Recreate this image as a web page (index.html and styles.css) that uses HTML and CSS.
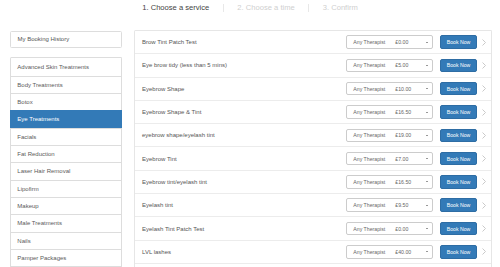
FILE: index.html
```
<!DOCTYPE html>
<html>
<head>
<meta charset="utf-8">
<link rel="stylesheet" href="styles.css">
</head>
<body>
<div class="steps">
  <span class="step active">1. Choose a service</span>
  <span class="step sep">2. Choose a time</span>
  <span class="step sep">3. Confirm</span>
</div>
<div class="main">
  <aside class="sidebar">
    <div class="box history">My Booking History</div>
    <ul class="list">
      <li>Advanced Skin Treatments</li>
      <li>Body Treatments</li>
      <li>Botox</li>
      <li class="current">Eye Treatments</li>
      <li>Facials</li>
      <li>Fat Reduction</li>
      <li>Laser Hair Removal</li>
      <li>Lipofirm</li>
      <li>Makeup</li>
      <li>Male Treatments</li>
      <li>Nails</li>
      <li>Pamper Packages</li>
    </ul>
  </aside>
  <section class="services">
    <div class="row"><span class="name">Brow Tint Patch Test</span><div class="select"><span class="who">Any Therapist</span><span>£0.00</span><i class="caret"></i></div><span class="btn">Book Now</span><svg class="chev" width="4" height="7" viewBox="0 0 4 7"><polyline points="0.5,0.5 3.5,3.5 0.5,6.5" fill="none" stroke="#c4c4c4" stroke-width="0.9"/></svg></div>
    <div class="row"><span class="name">Eye brow tidy (less than 5 mins)</span><div class="select"><span class="who">Any Therapist</span><span>£5.00</span><i class="caret"></i></div><span class="btn">Book Now</span><svg class="chev" width="4" height="7" viewBox="0 0 4 7"><polyline points="0.5,0.5 3.5,3.5 0.5,6.5" fill="none" stroke="#c4c4c4" stroke-width="0.9"/></svg></div>
    <div class="row"><span class="name">Eyebrow Shape</span><div class="select"><span class="who">Any Therapist</span><span>£10.00</span><i class="caret"></i></div><span class="btn">Book Now</span><svg class="chev" width="4" height="7" viewBox="0 0 4 7"><polyline points="0.5,0.5 3.5,3.5 0.5,6.5" fill="none" stroke="#c4c4c4" stroke-width="0.9"/></svg></div>
    <div class="row"><span class="name">Eyebrow Shape &amp; Tint</span><div class="select"><span class="who">Any Therapist</span><span>£16.50</span><i class="caret"></i></div><span class="btn">Book Now</span><svg class="chev" width="4" height="7" viewBox="0 0 4 7"><polyline points="0.5,0.5 3.5,3.5 0.5,6.5" fill="none" stroke="#c4c4c4" stroke-width="0.9"/></svg></div>
    <div class="row"><span class="name">eyebrow shape/eyelash tint</span><div class="select"><span class="who">Any Therapist</span><span>£19.00</span><i class="caret"></i></div><span class="btn">Book Now</span><svg class="chev" width="4" height="7" viewBox="0 0 4 7"><polyline points="0.5,0.5 3.5,3.5 0.5,6.5" fill="none" stroke="#c4c4c4" stroke-width="0.9"/></svg></div>
    <div class="row"><span class="name">Eyebrow Tint</span><div class="select"><span class="who">Any Therapist</span><span>£7.00</span><i class="caret"></i></div><span class="btn">Book Now</span><svg class="chev" width="4" height="7" viewBox="0 0 4 7"><polyline points="0.5,0.5 3.5,3.5 0.5,6.5" fill="none" stroke="#c4c4c4" stroke-width="0.9"/></svg></div>
    <div class="row"><span class="name">Eyebrow tint/eyelash tint</span><div class="select"><span class="who">Any Therapist</span><span>£16.50</span><i class="caret"></i></div><span class="btn">Book Now</span><svg class="chev" width="4" height="7" viewBox="0 0 4 7"><polyline points="0.5,0.5 3.5,3.5 0.5,6.5" fill="none" stroke="#c4c4c4" stroke-width="0.9"/></svg></div>
    <div class="row"><span class="name">Eyelash tint</span><div class="select"><span class="who">Any Therapist</span><span>£9.50</span><i class="caret"></i></div><span class="btn">Book Now</span><svg class="chev" width="4" height="7" viewBox="0 0 4 7"><polyline points="0.5,0.5 3.5,3.5 0.5,6.5" fill="none" stroke="#c4c4c4" stroke-width="0.9"/></svg></div>
    <div class="row"><span class="name">Eyelash Tint Patch Test</span><div class="select"><span class="who">Any Therapist</span><span>£0.00</span><i class="caret"></i></div><span class="btn">Book Now</span><svg class="chev" width="4" height="7" viewBox="0 0 4 7"><polyline points="0.5,0.5 3.5,3.5 0.5,6.5" fill="none" stroke="#c4c4c4" stroke-width="0.9"/></svg></div>
    <div class="row"><span class="name">LVL lashes</span><div class="select"><span class="who">Any Therapist</span><span>£40.00</span><i class="caret"></i></div><span class="btn">Book Now</span><svg class="chev" width="4" height="7" viewBox="0 0 4 7"><polyline points="0.5,0.5 3.5,3.5 0.5,6.5" fill="none" stroke="#c4c4c4" stroke-width="0.9"/></svg></div>
  </section>
</div>
</body>
</html>
```
FILE: styles.css
```
* { box-sizing: border-box; }
html, body { margin: 0; padding: 0; background: #fff; overflow: hidden; height: 267px; }
body {
  font-family: "Liberation Sans", Arial, sans-serif;
  font-size: 6px;
  color: #555;
}
.steps {
  height: 16px;
  display: flex;
  justify-content: center;
  align-items: center;
  font-size: 7.6px;
  color: #cfcfcf;
}
.step { padding: 0 13.5px; line-height: 8.5px; }
.step.sep { border-left: 1px solid #e8e8e8; }
.step.active { color: #444; }
.main {
  display: flex;
  gap: 12px;
  padding: 14px 8px 0 10px;
}
.sidebar { width: 112px; flex: none; padding-top: 0.7px; }
.box {
  border: 1px solid #ddd;
  border-radius: 1.5px;
}
.history {
  height: 17.33px;
  display: flex;
  align-items: center;
  padding-left: 6.5px;
  margin-bottom: 9.3px;
}
.list {
  list-style: none;
  margin: 0;
  padding: 0;
  border: 1px solid #ddd;
  border-bottom: none;
  border-radius: 1.5px;
}
.list::after {
  content: "";
  display: block;
  height: 17px;
  border-top: 1px solid #ddd;
}
.list li {
  height: 17.33px;
  display: flex;
  align-items: center;
  padding-left: 6.3px;
  border-top: 1px solid #ddd;
  color: #5a5a5a;
}
.list li:first-child { border-top: none; }
.list li.current {
  background: #337ab7;
  color: #fff;
  border-top-color: #337ab7;
  margin: 0 -1px;
  padding-left: 7.3px;
}
.services {
  flex: 1;
  border: 1px solid #e6e6e6;
  border-bottom: none;
  border-radius: 1.5px;
}
.services::after {
  content: "";
  display: block;
  height: 20px;
}
.row {
  height: 23.3px;
  display: flex;
  align-items: center;
  padding: 0 5px 0 7px;
  border-bottom: 1px solid #ececec;
}
.name { flex: 1; color: #555; }
.select {
  position: relative;
  width: 87px;
  height: 13.5px;
  border: 1px solid #ccc;
  border-radius: 2px;
  display: flex;
  align-items: center;
  padding-left: 6.3px;
  font-size: 5.2px;
  color: #666;
}
.who { width: 42px; }
.caret {
  position: absolute;
  right: 4px;
  top: 5.3px;
  width: 0;
  height: 0;
  border-left: 1.3px solid transparent;
  border-right: 1.3px solid transparent;
  border-top: 1.8px solid #333;
}
.btn {
  margin-left: 7px;
  width: 37px;
  height: 13.5px;
  display: flex;
  align-items: center;
  justify-content: center;
  background: #337ab7;
  border: 1px solid #2e6da4;
  border-radius: 2px;
  color: #fff;
  font-size: 5.2px;
}
.chev { margin-left: 5px; flex: none; }
```
